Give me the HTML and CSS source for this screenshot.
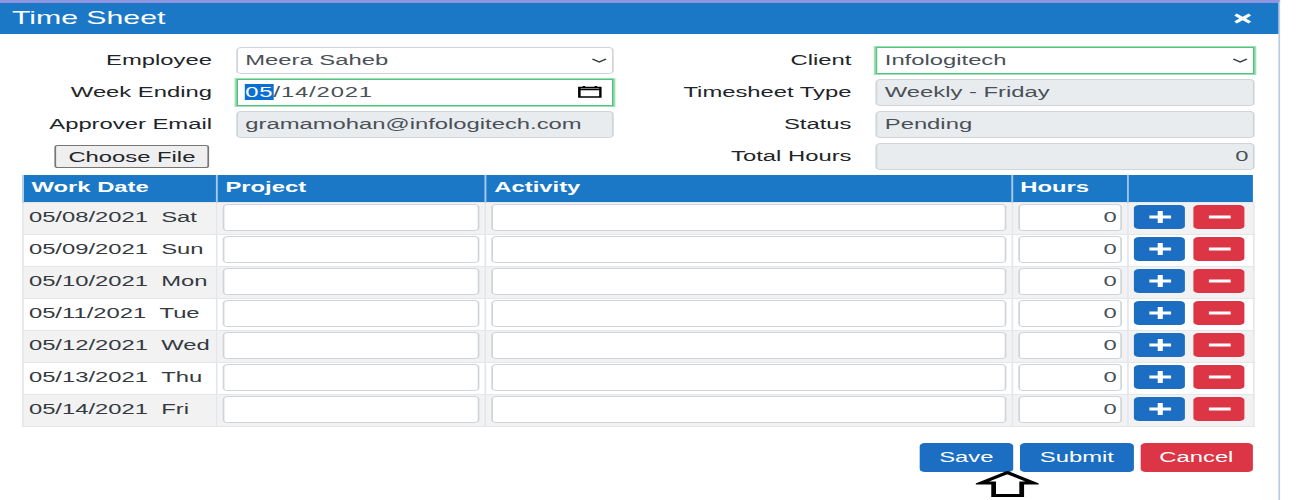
FILE: index.html
```html
<!DOCTYPE html>
<html lang="en">
<head>
  <meta charset="UTF-8">
  <title>Time Sheet</title>
  <link rel="stylesheet" href="styles.css">
</head>
<body>
  <div class="modal">
    <header class="modal-head">
      <h1>Time Sheet</h1>
      <svg class="close-icon" width="10" height="11" viewBox="0 0 10 11"><path d="M1.5 0.5 5 3.7 8.5 0.5 10 2.5 7 5.5 10 8.5 8.5 10.5 5 7.3 1.5 10.5 0 8.5 3 5.5 0 2.5Z"/></svg>
    </header>

    <div class="top-form">
      <label class="lbl">Employee</label>
      <div class="field">Meera Saheb
        <svg class="chevron" width="9" height="5" viewBox="0 0 9 5"><path d="M0.5 1 4.5 4 8.5 1"/></svg>
      </div>
      <label class="lbl">Client</label>
      <div class="field focused">Infologitech
        <svg class="chevron" width="9" height="5" viewBox="0 0 9 5"><path d="M0.5 1 4.5 4 8.5 1"/></svg>
      </div>

      <label class="lbl">Week Ending</label>
      <div class="field focused date"><span><span class="sel">05</span>/14/2021</span>
        <svg class="cal" width="14" height="14" viewBox="0 0 14 14"><path d="M0.8 2.5h12.4v9.5H0.8zM0.8 4.5h12.4M3.5 1v1.5M10.5 1v1.5"/></svg>
      </div>
      <label class="lbl">Timesheet Type</label>
      <div class="field off">Weekly - Friday</div>

      <label class="lbl">Approver Email</label>
      <div class="field off">gramamohan@infologitech.com</div>
      <label class="lbl">Status</label>
      <div class="field off">Pending</div>

      <div class="file-cell"><button class="file-btn">Choose File</button></div>
      <div></div>
      <label class="lbl">Total Hours</label>
      <div class="field off num">0</div>
    </div>

    <table class="sheet">
      <thead>
        <tr><th class="c-date">Work Date</th><th class="c-proj">Project</th><th class="c-act">Activity</th><th class="c-hrs">Hours</th><th class="c-btn"></th></tr>
      </thead>
      <tbody id="rows">
        <tr><td>05/08/2021 &nbsp;Sat</td><td><input></td><td><input></td><td><input class="num" value="0"></td><td><div class="acts"><button class="ico blue"><svg width="13" height="12" viewBox="0 0 13 12"><path d="M0 4.5h5V0h3v4.5h5v3H8V12H5V7.5H0z"/></svg></button><button class="ico red"><svg width="13" height="12" viewBox="0 0 13 12"><path d="M0 4.5h13v3H0z"/></svg></button></div></td></tr>
        <tr><td>05/09/2021 &nbsp;Sun</td><td><input></td><td><input></td><td><input class="num" value="0"></td><td><div class="acts"><button class="ico blue"><svg width="13" height="12" viewBox="0 0 13 12"><path d="M0 4.5h5V0h3v4.5h5v3H8V12H5V7.5H0z"/></svg></button><button class="ico red"><svg width="13" height="12" viewBox="0 0 13 12"><path d="M0 4.5h13v3H0z"/></svg></button></div></td></tr>
        <tr><td>05/10/2021 &nbsp;Mon</td><td><input></td><td><input></td><td><input class="num" value="0"></td><td><div class="acts"><button class="ico blue"><svg width="13" height="12" viewBox="0 0 13 12"><path d="M0 4.5h5V0h3v4.5h5v3H8V12H5V7.5H0z"/></svg></button><button class="ico red"><svg width="13" height="12" viewBox="0 0 13 12"><path d="M0 4.5h13v3H0z"/></svg></button></div></td></tr>
        <tr><td>05/11/2021 &nbsp;Tue</td><td><input></td><td><input></td><td><input class="num" value="0"></td><td><div class="acts"><button class="ico blue"><svg width="13" height="12" viewBox="0 0 13 12"><path d="M0 4.5h5V0h3v4.5h5v3H8V12H5V7.5H0z"/></svg></button><button class="ico red"><svg width="13" height="12" viewBox="0 0 13 12"><path d="M0 4.5h13v3H0z"/></svg></button></div></td></tr>
        <tr><td>05/12/2021 &nbsp;Wed</td><td><input></td><td><input></td><td><input class="num" value="0"></td><td><div class="acts"><button class="ico blue"><svg width="13" height="12" viewBox="0 0 13 12"><path d="M0 4.5h5V0h3v4.5h5v3H8V12H5V7.5H0z"/></svg></button><button class="ico red"><svg width="13" height="12" viewBox="0 0 13 12"><path d="M0 4.5h13v3H0z"/></svg></button></div></td></tr>
        <tr><td>05/13/2021 &nbsp;Thu</td><td><input></td><td><input></td><td><input class="num" value="0"></td><td><div class="acts"><button class="ico blue"><svg width="13" height="12" viewBox="0 0 13 12"><path d="M0 4.5h5V0h3v4.5h5v3H8V12H5V7.5H0z"/></svg></button><button class="ico red"><svg width="13" height="12" viewBox="0 0 13 12"><path d="M0 4.5h13v3H0z"/></svg></button></div></td></tr>
        <tr><td>05/14/2021 &nbsp;Fri</td><td><input></td><td><input></td><td><input class="num" value="0"></td><td><div class="acts"><button class="ico blue"><svg width="13" height="12" viewBox="0 0 13 12"><path d="M0 4.5h5V0h3v4.5h5v3H8V12H5V7.5H0z"/></svg></button><button class="ico red"><svg width="13" height="12" viewBox="0 0 13 12"><path d="M0 4.5h13v3H0z"/></svg></button></div></td></tr>
      </tbody>
    </table>

    <div class="foot">
      <button class="btn blue b-save">Save</button>
      <button class="btn blue b-submit">Submit</button>
      <button class="btn red b-cancel">Cancel</button>
      <svg class="arrow" width="37" height="27" viewBox="0 0 37 27"><path d="M18.5 1.5 34 12H27V24.5H10.5V12H3Z"/></svg>
    </div>
  </div>
</body>
</html>
```

FILE: styles.css
```css
/* the whole sheet is wider than tall in the original, so stretch it sideways */
html, body {
  margin: 0;
  height: 500px;
  overflow: hidden;
  background: #fff;
}
.modal {
  width: 752.6px;
  height: 500px;
  box-sizing: border-box;
  border-top: 3px solid #8f95e0;
  border-right: 1px solid #b9cbe6;
  font-family: "Liberation Sans", Arial, sans-serif;
  font-size: 14px;
  color: #212529;
  transform: scaleX(1.7);
  transform-origin: 0 0;
}
.modal-head {
  height: 31px;
  background: #1a78c6;
  color: #fff;
  display: flex;
  align-items: center;
  justify-content: space-between;
  padding: 0 15.5px 0 7px;
}
.modal-head h1 {
  margin: 0;
  font-size: 17.8px;
  font-weight: normal;
}
.close-icon {
  fill: #fff;
}

.top-form {
  display: grid;
  grid-template-columns: 124.7px 222.4px 125.6px 223px;
  grid-auto-rows: 27px;
  column-gap: 14.1px;
  row-gap: 5px;
  margin-top: 13px;
}
.lbl {
  text-align: right;
  align-self: center;
  padding-bottom: 1px;
}
.field {
  box-sizing: border-box;
  height: 27px;
  padding: 0 4.5px 1px;
  display: flex;
  align-items: center;
  justify-content: space-between;
  background: #fff;
  border: 1px solid #ced4da;
  border-radius: 3px;
  color: #495057;
}
.field.off {
  background: #e9ecef;
}
.field.num {
  justify-content: flex-end;
  padding-right: 2.5px;
}
.field.focused {
  border: 1px solid #4fc47c;
  border-radius: 0;
  box-shadow: 0 0 0 1px #9fe0b6;
}
.date {
  letter-spacing: 0.5px;
}
.sel {
  background: #0a6fd0;
  color: #fff;
}
.chevron {
  fill: none;
  stroke: #343a40;
  stroke-width: 1.2;
  margin-right: -1.5px;
}
.cal {
  fill: none;
  stroke: #000;
  stroke-width: 1.5;
  margin-right: 1.5px;
}
.file-cell {
  display: flex;
  justify-content: flex-end;
  align-items: center;
}
.file-btn {
  width: 90.6px;
  height: 23px;
  margin-right: 1.8px;
  padding: 0;
  font: inherit;
  color: #212529;
  background: #efefef;
  border: 1px solid #767676;
  border-radius: 2px;
}

.sheet {
  margin: 5px 0 0 13px;
  width: 724px;
  table-layout: fixed;
  border-collapse: collapse;
}
.sheet th {
  height: 27px;
  padding: 0 3px 2px 4.5px;
  background: #1a78c6;
  color: #fff;
  font-size: 14px;
  text-align: left;
  border-left: 1px solid #a9cbe8;
  box-sizing: border-box;
}
.c-date { width: 114.1px; }
.c-proj { width: 158.2px; }
.c-act { width: 309.4px; }
.c-hrs { width: 68.2px; }
.c-btn { width: 74.1px; }
.sheet td {
  height: 32px;
  box-sizing: border-box;
  padding: 0 3px 2px;
  border: 1px solid #e3e6ea;
  white-space: nowrap;
  color: #343a40;
  overflow: hidden;
}
.sheet tbody tr:nth-child(odd) td {
  background: #f2f2f2;
}
.sheet input {
  display: block;
  width: 100%;
  box-sizing: border-box;
  height: 27px;
  padding: 0 3px;
  font: inherit;
  color: #495057;
  background: #fff;
  border: 1px solid #ced4da;
  border-radius: 3px;
}
.sheet input.num {
  text-align: right;
  padding-right: 2px;
}
.acts {
  display: flex;
  gap: 4.7px;
  margin-left: 0.5px;
}
.ico {
  width: 30px;
  height: 24px;
  padding: 0;
  display: flex;
  align-items: center;
  justify-content: center;
  border: none;
  border-radius: 3px;
}
.ico svg {
  fill: #fff;
}
.blue { background: #1b6ec2; }
.red { background: #dc3545; }

.foot {
  position: relative;
  display: flex;
  justify-content: flex-end;
  gap: 3.8px;
  width: 737px;
  margin-top: 16px;
}
.btn {
  height: 29px;
  padding: 0;
  font: inherit;
  color: #fff;
  border: none;
  border-radius: 3px;
}
.b-save { width: 55.9px; }
.b-submit { width: 66.5px; }
.b-cancel { width: 66.5px; }
.arrow {
  position: absolute;
  left: 573.5px;
  top: 28px;
  fill: #fff;
  stroke: #000;
  stroke-width: 2.8;
  stroke-linejoin: miter;
}
```
